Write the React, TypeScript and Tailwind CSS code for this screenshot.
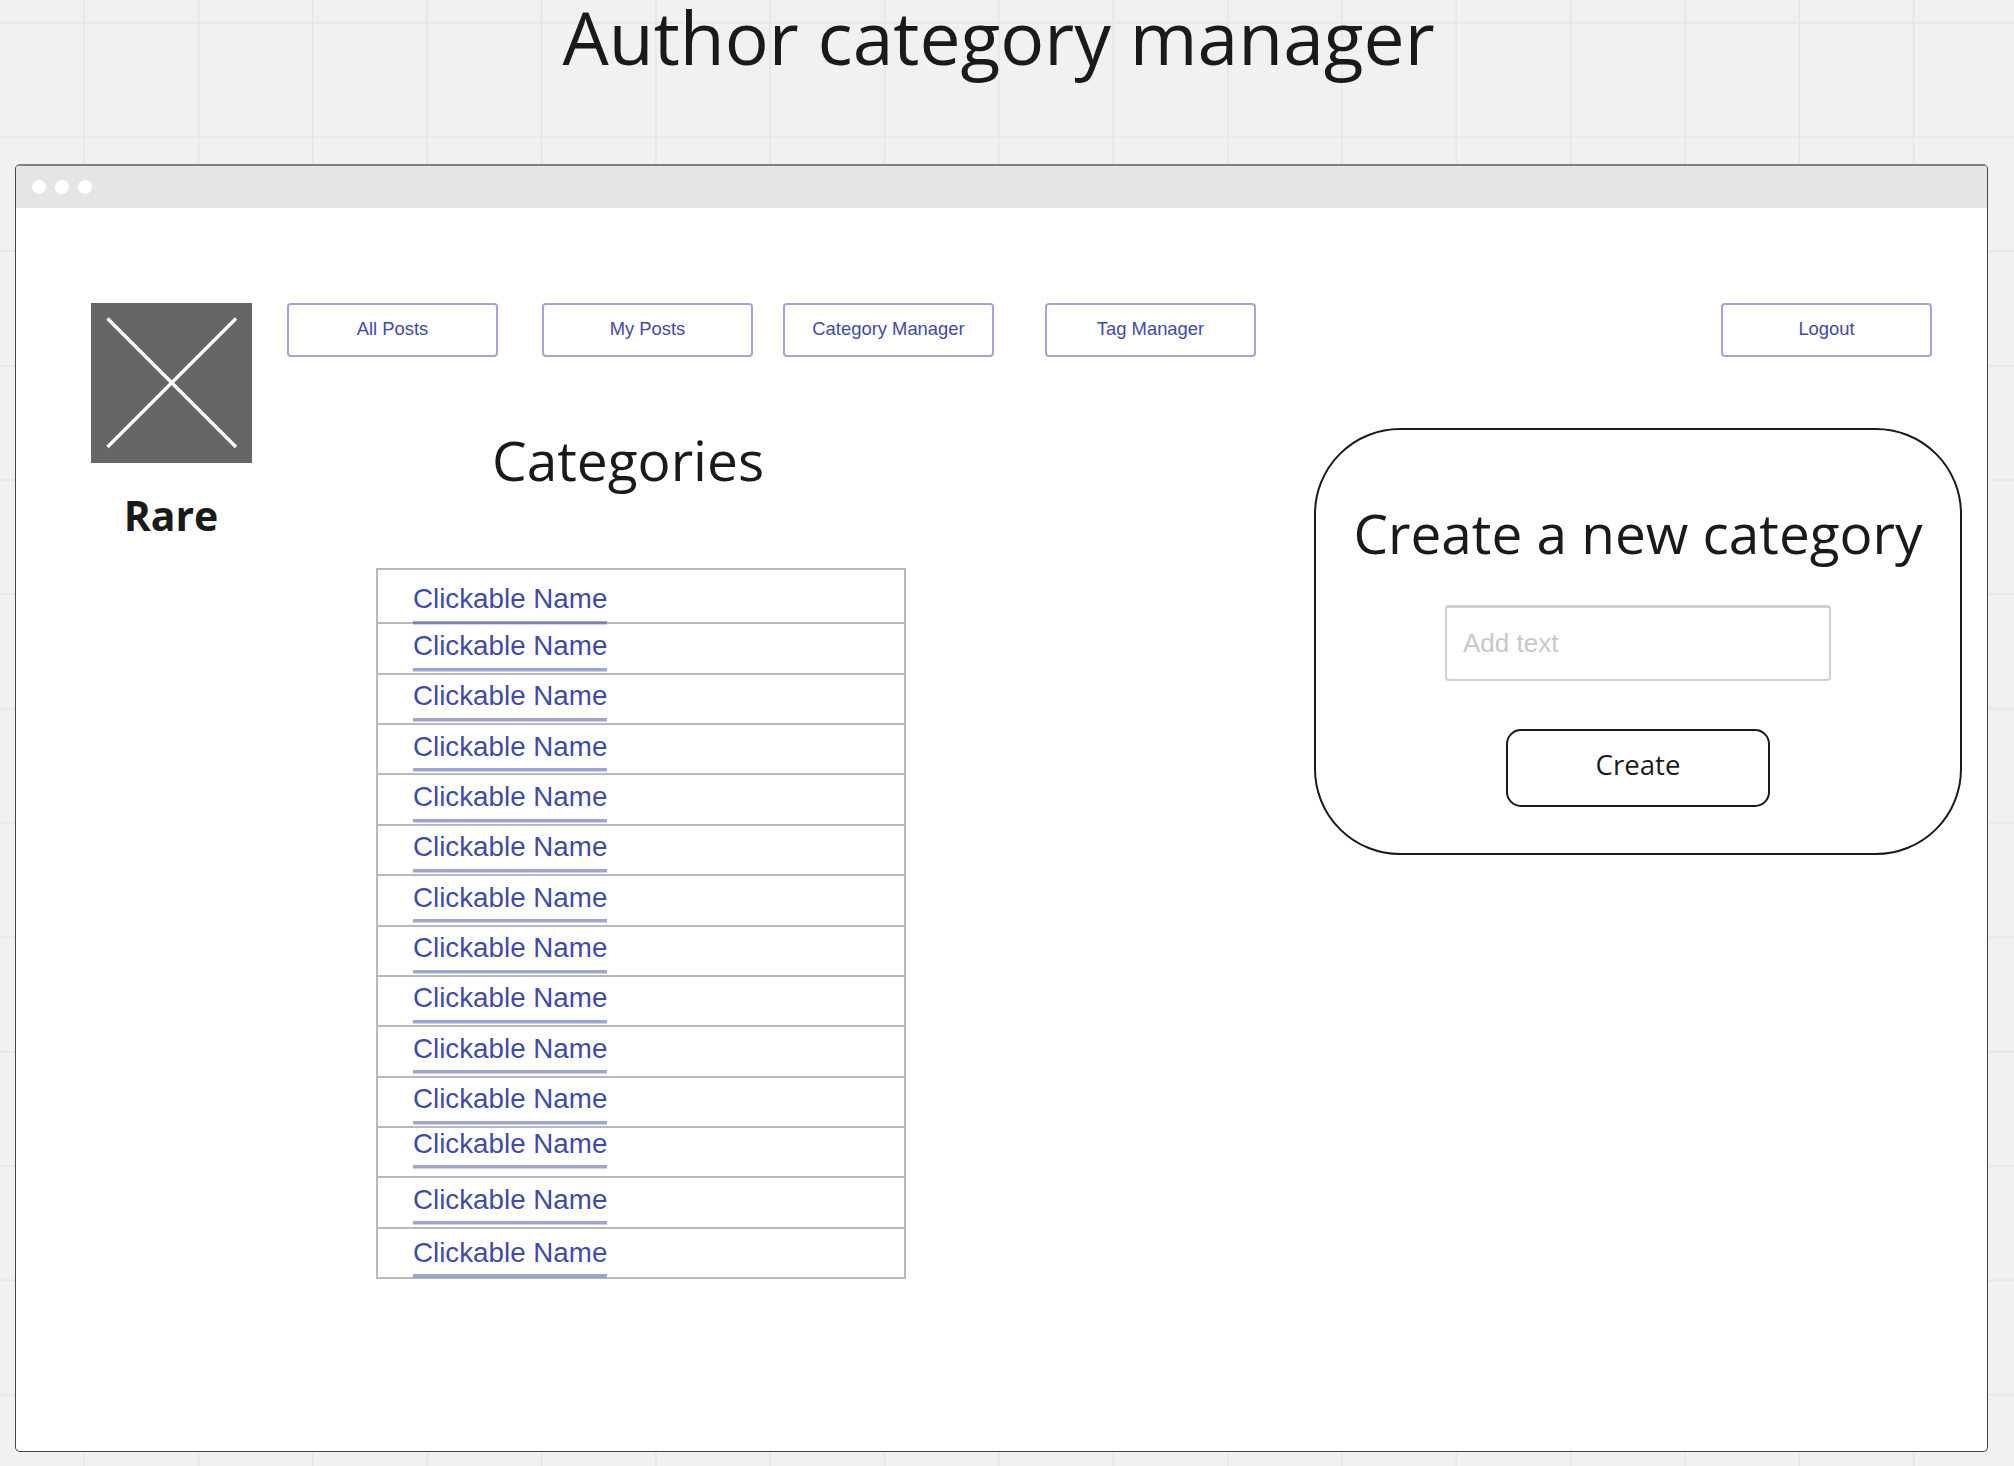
import React from "react";

const GRID_STEP = 114.34;
const verticals = Array.from({ length: 17 }, (_, i) => 84.2 + i * GRID_STEP);
const horizontals = Array.from({ length: 13 }, (_, i) => 22.6 + i * GRID_STEP);

function CanvasGrid() {
  return (
    <svg className="absolute inset-0" width="2014" height="1466" stroke="#e6e6e6" strokeWidth="1.6">
      {verticals.map((x) => (
        <line key={x} x1={x} x2={x} y1="0" y2="1466" />
      ))}
      {horizontals.map((y) => (
        <line key={y} x1="0" x2="2014" y1={y} y2={y} />
      ))}
    </svg>
  );
}

function NavButton({ label, className = "" }: { label: string; className?: string }) {
  return (
    <button
      className={`flex h-[54px] w-[211px] items-center justify-center rounded-[4px] border-2 border-[#a2a6d7] pb-[2px] font-['Liberation_Sans',sans-serif] text-[18.4px] text-[#3f4aab] ${className}`}
    >
      {label}
    </button>
  );
}

const rows = [
  "h-[54.8px] pt-[13.4px]",
  "h-[50.4px] pt-[5.6px]",
  "h-[50.35px] pt-[5.6px]",
  "h-[50.35px] pt-[5.6px]",
  "h-[50.35px] pt-[5.6px]",
  "h-[50.35px] pt-[5.6px]",
  "h-[50.35px] pt-[5.6px]",
  "h-[50.35px] pt-[5.6px]",
  "h-[50.35px] pt-[5.6px]",
  "h-[50.35px] pt-[5.6px]",
  "h-[50.35px] pt-[5.6px]",
  "h-[50.35px] pt-0",
  "h-[50.35px] pt-[5.6px]",
  "h-[50.35px] pt-[8px]",
];

function CategoryList() {
  return (
    <ul className="mt-[77.6px] w-[530px] border-x-2 border-b-2 border-[#b9b9b9]">
      {rows.map((row, i) => (
        <li key={i} className={`flex items-start border-t-2 border-[#b9b9b9] pl-[35px] ${row}`}>
          <a className="h-[40.6px] shrink-0 whitespace-nowrap border-b-[3px] border-[#3f4aab]/50 font-['Liberation_Sans',sans-serif] text-[27.75px] leading-[32px] text-[#3f4aab] shadow-[0_1px_0_0_rgba(63,74,171,0.25)]">
            Clickable Name
          </a>
        </li>
      ))}
    </ul>
  );
}

function CreateCard() {
  return (
    <section className="mr-[25px] mt-[71px] flex h-[427px] w-[648px] flex-col items-center rounded-[86px] border-2 border-[#1a1a1a]">
      <h2 className="mt-[73px] whitespace-nowrap text-[54.9px] leading-[60px]">Create a new category</h2>
      <div className="mt-[42px] flex h-[76px] w-[386px] items-center rounded-[4px] border-2 border-t-[3px] border-[#d0d0d0] pl-[16px] font-['Liberation_Sans',sans-serif] text-[26px] text-[#c8c8c8]">
        Add text
      </div>
      <button className="mt-[48px] flex h-[78px] w-[264px] items-center justify-center rounded-[15px] border-2 border-[#1a1a1a] pb-[6px] text-[27.6px]">
        Create
      </button>
    </section>
  );
}

export default function App() {
  return (
    <div className="relative h-[1466px] w-[2014px] overflow-hidden bg-[#f1f1f1] font-['Open_Sans',sans-serif] text-[#1a1a1a]">
      <CanvasGrid />
      <div className="relative flex flex-col pl-[15px]">
        <h1 className="ml-[547.5px] whitespace-nowrap text-[73.2px] leading-[74px]">Author category manager</h1>

        <div className="mt-[90px] h-[1288px] w-[1973px] rounded-[5px] border border-t-2 border-[#444444] border-t-[#808080] bg-white">
          <div className="flex h-[42px] items-center gap-[9px] rounded-t-[3px] bg-[#e5e5e5] pb-px pl-[15.5px]">
            <span className="size-[14px] rounded-full bg-white" />
            <span className="size-[14px] rounded-full bg-white" />
            <span className="size-[14px] rounded-full bg-white" />
          </div>

          <div className="flex pl-[75px] pt-[95px]">
            <aside className="flex w-[161px] shrink-0 flex-col items-center">
              <svg width="161" height="160" className="bg-[#666666]" stroke="white" strokeWidth="3.4">
                <path d="M16.5 15.5 L145 144 M145 15.5 L16.5 144" />
              </svg>
              <div className="mr-[1px] mt-[28px] text-[41px] font-bold leading-[48px]">Rare</div>
            </aside>

            <main className="ml-[35px] flex-1">
              <nav className="flex pr-[55px]">
                <NavButton label="All Posts" />
                <NavButton label="My Posts" className="ml-[44px]" />
                <NavButton label="Category Manager" className="ml-[30px]" />
                <NavButton label="Tag Manager" className="ml-[51px]" />
                <NavButton label="Logout" className="ml-auto" />
              </nav>

              <div className="flex items-start justify-between">
                <section className="ml-[89px] mt-[73px]">
                  <h2 className="ml-[116px] text-[55px] leading-[60px]">Categories</h2>
                  <CategoryList />
                </section>
                <CreateCard />
              </div>
            </main>
          </div>
        </div>
      </div>
    </div>
  );
}
